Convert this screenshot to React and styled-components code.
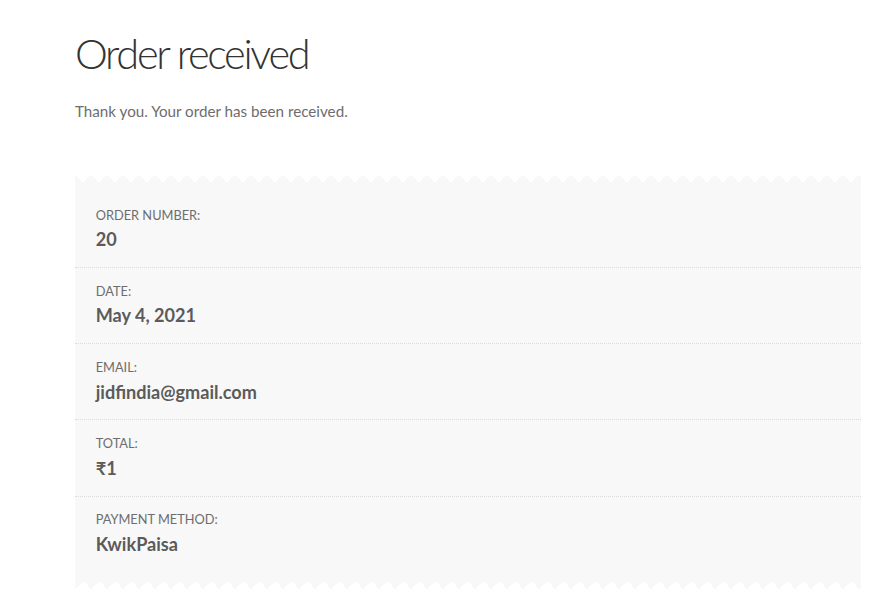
import React from "react";
import styled, { createGlobalStyle } from "styled-components";

const GlobalStyle = createGlobalStyle`
  html, body {
    margin: 0;
    padding: 0;
    background: #ffffff;
  }
  body {
    font-family: Lato, "Open Sans", "Liberation Sans", sans-serif;
    font-size: 16px;
    color: #6d6d6d;
    -webkit-font-smoothing: antialiased;
  }
`;

const panelBg = "#f8f8f8";

// Page column
const Page = styled.main`
  width: 786px;
  padding: 28px 0 0 75px;
`;

const Title = styled.h1`
  margin: 0;
  font-size: 41.5px;
  line-height: 1.214;
  font-weight: 300;
  letter-spacing: -2.3px;
  color: #333333;
`;

const Notice = styled.p`
  margin: 21px 0 0;
  font-size: 15.2px;
  line-height: 1.618;
  color: #6d6d6d;
`;

// Zigzag edge above/below the summary panel
const Edge = styled.div`
  height: 8px;
  background: conic-gradient(
      from ${(props) => (props.bottom ? "135deg" : "-45deg")}
        at 50% ${(props) => (props.bottom ? "0" : "100%")},
      transparent 90deg,
      ${panelBg} 0
    )
    0 0 / 16px 8px repeat-x;
`;

const Summary = styled.section`
  margin-top: 50px;
`;

const OverviewList = styled.ul`
  list-style: none;
  margin: 0;
  padding: 10px 0 9px;
  background: ${panelBg};
`;

const Item = styled.li`
  padding: 12.6px 20.7px;
  font-size: 12.8px;
  line-height: 1.618;
  text-transform: uppercase;
  color: #6d6d6d;
  border-bottom: 1px dotted #dcdcdc;

  &:last-child {
    border-bottom: none;
  }
`;

const Value = styled.strong`
  display: block;
  font-size: 18.1px;
  line-height: 1.618;
  font-weight: 700;
  text-transform: none;
  color: #5b5b5b;
`;

const details = [
  { label: "Order number:", value: "20" },
  { label: "Date:", value: "May 4, 2021" },
  { label: "Email:", value: "jidfindia@gmail.com" },
  { label: "Total:", value: "₹1" },
  { label: "Payment method:", value: "KwikPaisa" },
];

const App = () => (
  <>
    <GlobalStyle />
    <Page>
      <Title>Order received</Title>
      <Notice>Thank you. Your order has been received.</Notice>
      <Summary>
        <Edge />
        <OverviewList>
          {details.map((d) => (
            <Item key={d.label}>
              {d.label}
              <Value>{d.value}</Value>
            </Item>
          ))}
        </OverviewList>
        <Edge bottom />
      </Summary>
    </Page>
  </>
);

export default App;
